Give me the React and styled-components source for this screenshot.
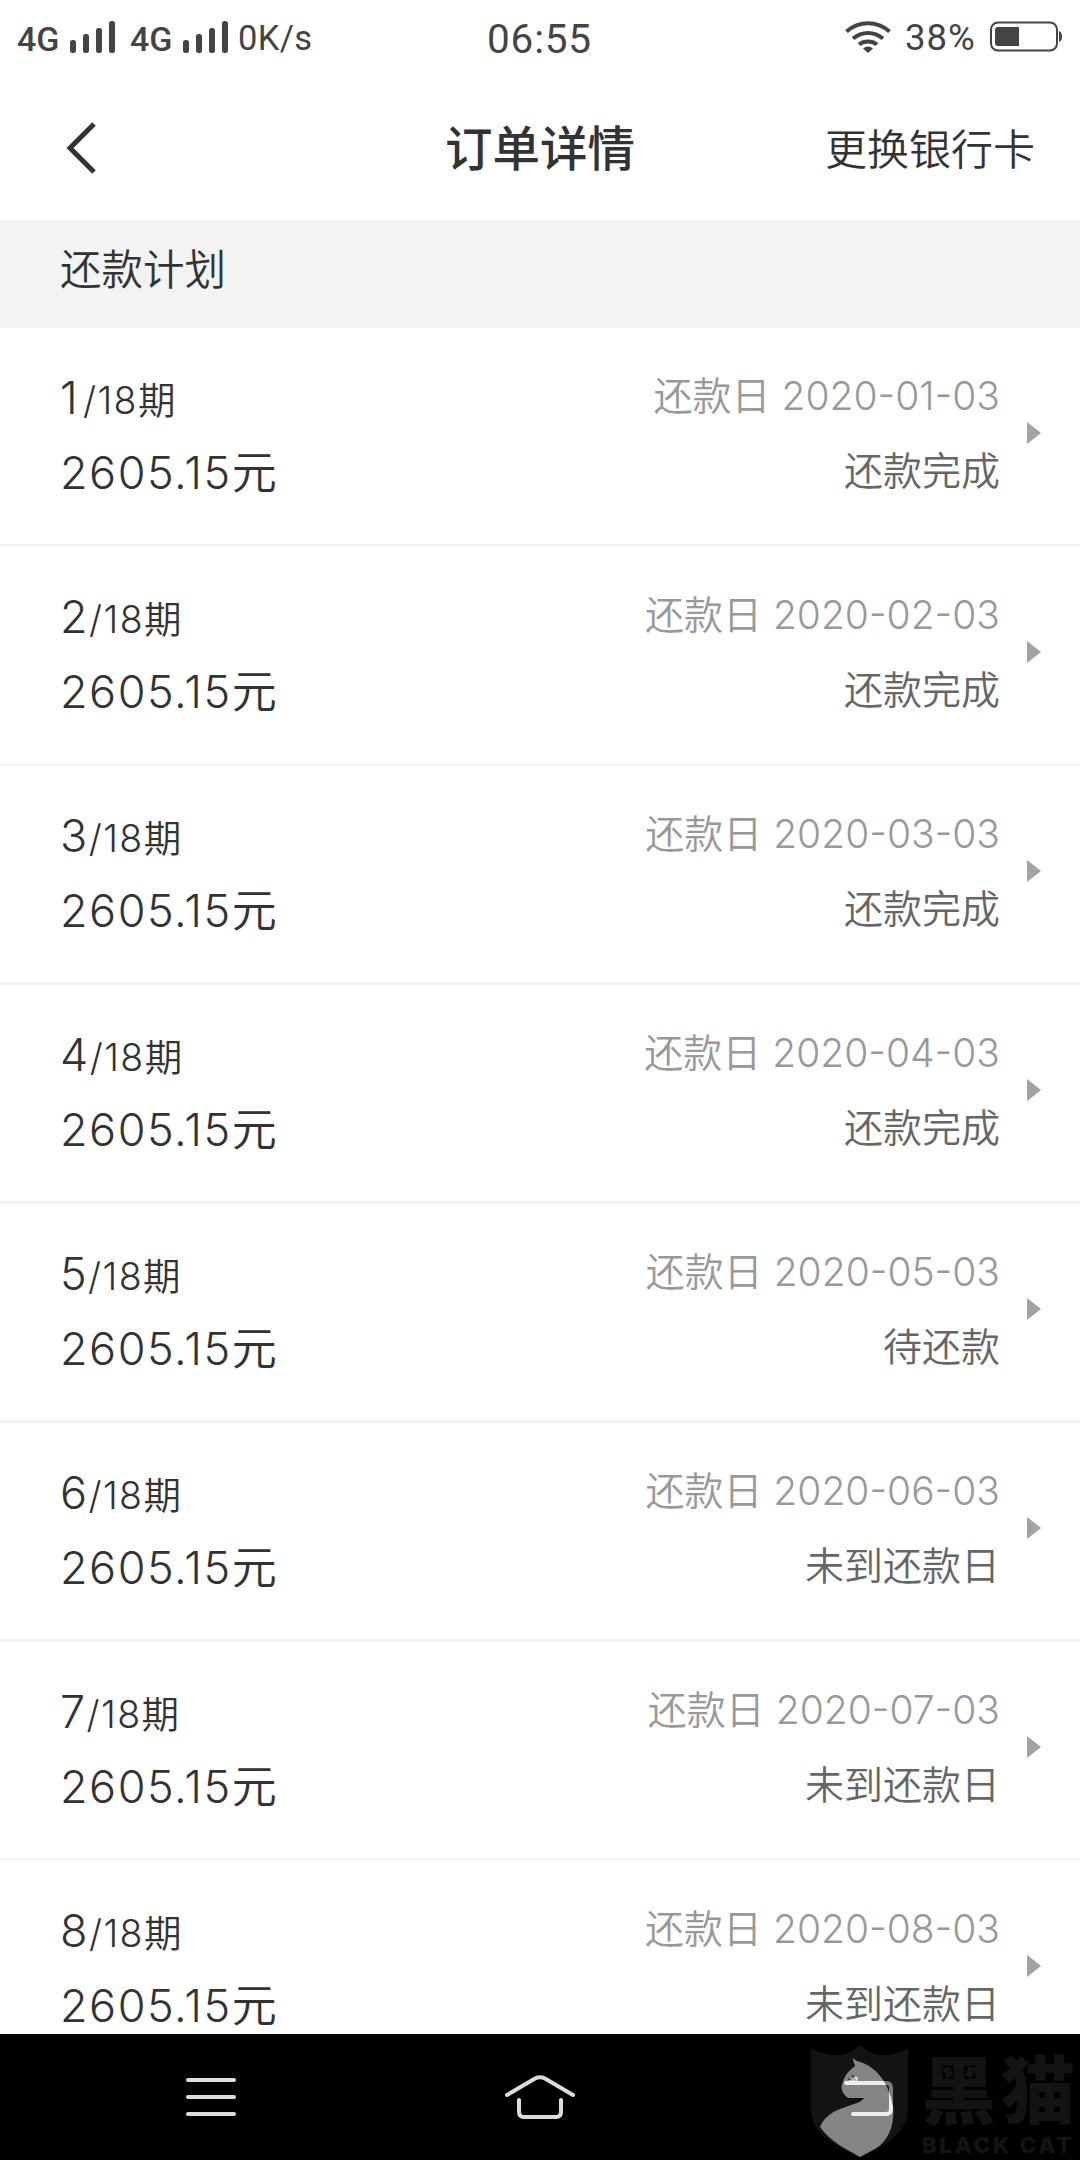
import React from "react";
import styled, { createGlobalStyle } from "styled-components";

const Global = createGlobalStyle`
  * { box-sizing: border-box; }
  html, body { margin: 0; padding: 0; background: #fff; }
  body { font-family: Inter, "Noto Sans CJK SC", sans-serif; color: #333; }
`;

const Screen = styled.div`
  width: 1080px;
  height: 2160px;
  display: flex;
  flex-direction: column;
  overflow: hidden;
  background: #fff;
`;

const StatusBar = styled.div`
  flex: none;
  height: 74px;
  padding: 0 18px 0 17px;
  display: grid;
  grid-template-columns: 1fr auto 1fr;
  align-items: center;
  font-family: Roboto, sans-serif;
  color: #444;
`;

const StatusGroup = styled.div`
  display: flex;
  align-items: center;
  justify-content: ${(p) => (p.$end ? "flex-end" : "flex-start")};
`;

const StatusText = styled.span`
  font-size: ${(p) => p.$size}px;
  line-height: 40px;
  font-weight: ${(p) => p.$weight || 400};
  letter-spacing: ${(p) => p.$track || 0}px;
  width: ${(p) => (p.$w ? p.$w + "px" : "auto")};
  white-space: nowrap;
  margin-top: ${(p) => p.$drop || 0}px;
`;

const Icon = styled.svg`
  display: block;
  flex: none;
  margin-right: ${(p) => p.$mr || 0}px;
`;

const Header = styled.header`
  flex: none;
  height: 146px;
  padding: 1px 46px 0 66px;
  display: grid;
  grid-template-columns: 1fr auto 1fr;
  align-items: center;
`;

const Title = styled.h1`
  margin: 0 20px 0 0;
  padding-top: 3px;
  font-size: 47.5px;
  line-height: 60px;
  font-weight: 500;
`;

const HeaderAction = styled.span`
  justify-self: end;
  padding-top: 4px;
  margin: 0 -1px 0 -20px;
  font-size: 42px;
  line-height: 60px;
  font-weight: 350;
`;

const SectionTitle = styled.div`
  flex: none;
  height: 108px;
  padding: 0 60px 15px;
  display: flex;
  align-items: center;
  background: #f3f3f3;
  font-size: 41.5px;
  font-weight: 350;
`;

const List = styled.div`
  flex: 1;
  min-height: 0;
  overflow: hidden;
`;

const Row = styled.div`
  height: 219px;
  padding: 0 39px 0 60px;
  display: flex;
  border-bottom: 3px solid #f3f3f3;
`;

const Column = styled.div`
  display: flex;
  flex-direction: column;
  padding-top: ${(p) => p.$top}px;
  align-items: ${(p) => (p.$end ? "flex-end" : "flex-start")};
  margin-left: ${(p) => (p.$end ? "auto" : "0")};
`;

const Line = styled.div`
  height: 75px;
  line-height: 75px;
  font-size: ${(p) => p.$size}px;
  color: ${(p) => p.$color || "#333"};
  letter-spacing: ${(p) => p.$track || 0}px;
  font-weight: 350;
  white-space: nowrap;
`;

const Index = styled.span`
  display: inline-block;
  min-width: 23px;
  font-size: 45px;
`;

const Numerals = styled.span`
  font-weight: 300;
`;

const Arrow = styled.span`
  align-self: center;
  margin: -7px 0 0 27px;
  border-left: 14px solid #a3a3a3;
  border-top: 11.5px solid transparent;
  border-bottom: 11.5px solid transparent;
`;

const NavBar = styled.nav`
  position: relative;
  flex: none;
  height: 126px;
  padding: 0 187px 0 186px;
  display: flex;
  align-items: center;
  justify-content: space-between;
  background: #000;
`;

const Watermark = styled.div`
  position: absolute;
  left: 811px;
  top: 11px;
  display: flex;
  opacity: 0.52;
`;

const Brand = styled.div`
  margin-left: 13px;
  color: #272526;
  width: 156px;
  white-space: nowrap;
`;

const BrandName = styled.div`
  margin-top: 4px;
  height: 84px;
  font-size: 74px;
  line-height: 84px;
  font-weight: 900;
  letter-spacing: 5px;
`;

const BrandLatin = styled.div`
  font-family: Inter, sans-serif;
  font-size: 22px;
  line-height: 24px;
  font-weight: 800;
  letter-spacing: 2.9px;
`;

const Signal = ({ gap }) => (
  <Icon width="46" height="34" viewBox="0 0 46 34" $mr={gap} fill="#444">
    <rect x="0" y="20" width="6" height="13" rx="2.5" />
    <rect x="13" y="14" width="6" height="19" rx="2.5" />
    <rect x="26" y="8" width="6" height="25" rx="2.5" />
    <rect x="39" y="1" width="6" height="32" rx="2.5" />
  </Icon>
);

const Wifi = () => (
  <Icon width="46" height="34" viewBox="0 0 46 34" $mr={14} fill="none" stroke="#444" strokeWidth="4">
    <path d="M1.5 11.5C14 .5 32 .5 44.5 11.5" />
    <path d="M8 18.5C17 11 29 11 38 18.5" />
    <path d="M14 24.5C19 20.5 27 20.5 32 24.5" />
    <path d="M18 28.5Q23 24.5 28 28.5L23 33Z" fill="#444" stroke="none" />
  </Icon>
);

const Battery = () => (
  <Icon width="72" height="32" viewBox="0 0 72 32">
    <rect x="1" y="1.5" width="66" height="28" rx="7" fill="none" stroke="#444" strokeWidth="2" />
    <path d="M8 6H29V25H8Q5 25 5 22V9Q5 6 8 6Z" fill="#444" />
    <path d="M69 10Q72 11 72 15.5T69 21Z" fill="#444" />
  </Icon>
);

const plan = [
  [1, "2020-01-03", "还款完成"],
  [2, "2020-02-03", "还款完成"],
  [3, "2020-03-03", "还款完成"],
  [4, "2020-04-03", "还款完成"],
  [5, "2020-05-03", "待还款"],
  [6, "2020-06-03", "未到还款日"],
  [7, "2020-07-03", "未到还款日"],
  [8, "2020-08-03", "未到还款日"],
];

export default function App() {
  return (
    <Screen>
      <Global />
      <StatusBar>
        <StatusGroup>
          <StatusText $size={34} $weight={500} $w={53} $drop={4}>4G</StatusText>
          <Signal gap={14} />
          <StatusText $size={34} $weight={500} $w={53} $drop={4}>4G</StatusText>
          <Signal gap={9} />
          <StatusText $size={34.5} $track={0.3} $drop={2}>0K/s</StatusText>
        </StatusGroup>
        <StatusText $size={40.5} $track={0.8} $drop={3}>06:55</StatusText>
        <StatusGroup $end>
          <Wifi />
          <StatusText $size={36.5} $track={1} $w={85} $drop={2}>38%</StatusText>
          <Battery />
        </StatusGroup>
      </StatusBar>
      <Header>
        <Icon width="32" height="52" viewBox="0 0 32 52" fill="none" stroke="#333" strokeWidth="5">
          <path d="M28 2L4 26L28 50" />
        </Icon>
        <Title>订单详情</Title>
        <HeaderAction>更换银行卡</HeaderAction>
      </Header>
      <SectionTitle>还款计划</SectionTitle>
      <List>
        {plan.map(([n, date, status]) => (
          <Row key={n}>
            <Column $top={32}>
              <Line $size={37.5} $track={1.4}>
                <Index>{n}</Index><Numerals>/18</Numerals>期
              </Line>
              <Line $size={45} $track={1.5}>2605.15元</Line>
            </Column>
            <Column $end $top={30}>
              <Line $size={39} $color="#999">还款日 <Numerals>{date}</Numerals></Line>
              <Line $size={39} $color="#666">{status}</Line>
            </Column>
            <Arrow />
          </Row>
        ))}
      </List>
      <NavBar>
        <Icon width="50" height="40" viewBox="0 0 50 40" stroke="#dcdcdc" strokeWidth="4" strokeLinecap="round">
          <path d="M2 3H48M2 20H48M2 37H48" />
        </Icon>
        <Icon width="72" height="46" viewBox="0 0 72 46" fill="none" stroke="#dcdcdc" strokeWidth="4" strokeLinecap="round">
          <path d="M3 21L31 4.5Q36 2 41 4.5L69 21" />
          <path d="M15 26V38Q15 43 20 43H52Q57 43 57 38V26" />
        </Icon>
        <Icon width="50" height="40" viewBox="0 0 50 40" fill="none" stroke="#dcdcdc" strokeWidth="4" strokeLinecap="round">
          <path d="M3 6H43Q48 6 48 11V32Q48 37 43 37H10" />
          <path d="M3 6L14 -1V6Z" fill="#dcdcdc" strokeWidth="1" />
        </Icon>
        <Watermark>
          <Icon width="98" height="114" viewBox="0 0 98 114">
            <path d="M0 3Q29 19 49 0Q69 19 97 3V66Q97 92 49 112Q0 92 0 66Z" fill="#272526" />
            <path d="M41.5 13L46 16C70 22 80 46 82 62C84 82 76 98 62 105L49 112C35 104 20 97 9 82C18 60 48 62 53 53H37C29 47 30 41 32 37C34 29 39 25 44 21Z" fill="#fff" />
            <path d="M37 34Q41 36 43 34M41 30L45 36" stroke="#777" strokeWidth="1.5" fill="none" />
          </Icon>
          <Brand>
            <BrandName>黑猫</BrandName>
            <BrandLatin>BLACK CAT</BrandLatin>
          </Brand>
        </Watermark>
      </NavBar>
    </Screen>
  );
}
